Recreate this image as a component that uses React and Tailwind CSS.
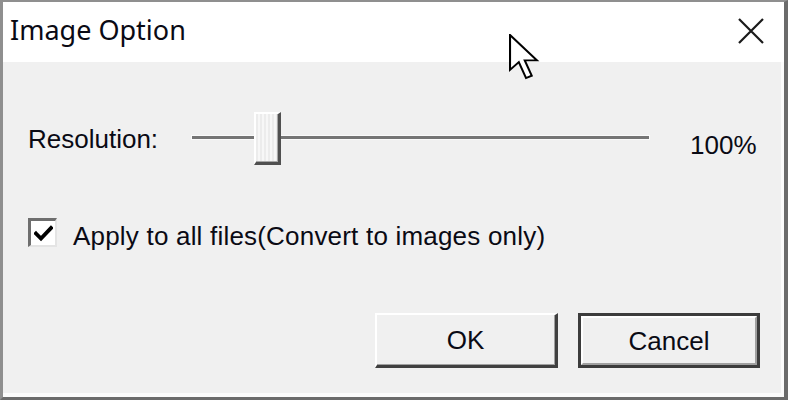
export default function App() {
  return (
    <div className="relative w-[788px] h-[400px] overflow-hidden bg-white">
      {/* window frame */}
      <div className="flex flex-col w-full h-full border-l-[3px] border-t-[2px] border-r-[4px] border-b-[3px] border-l-[#8f8f8f] border-t-[#8f8f8f] border-r-[#6b6b6b] border-b-[#6b6b6b]">
        {/* title bar */}
        <div className="flex items-start justify-between h-[60px] shrink-0 bg-white pl-[7px] pr-[19px]">
          <div className="mt-[10px] text-[27px] leading-[36px] text-[#0a0a14]" style={{ fontFamily: '"Noto Sans", sans-serif' }}>
            Image Option
          </div>
          <svg width="28" height="26" viewBox="0 0 28 26" className="mt-[16px]">
            <path d="M2 1 L26 25 M26 1 L2 25" stroke="#1a1a1a" strokeWidth="2.2" fill="none" />
          </svg>
        </div>

        {/* body */}
        <div
          className="flex-1 flex flex-col bg-[#f0f0f0] border-r-[3px] border-b-[4px] border-[#fbfbfb] pl-[25px] pr-[21px] pt-[50px] text-[26px] leading-[30px] text-[#0a0a14]"
          style={{ fontFamily: '"Liberation Sans", Arial, sans-serif' }}
        >
          {/* resolution row */}
          <div className="flex items-start h-[53px]">
            <div className="w-[162px] mt-[12px]">Resolution:</div>
            <div className="relative w-[462px] h-[53px]">
              <div className="absolute left-[2px] right-[3px] top-[24px] h-[3px] bg-[#757575] shadow-[0_0_0_1px_#fafafa]" />
              {/* thumb */}
              <div className="absolute left-[64px] top-0 w-[27px] h-[53px] flex border-l-2 border-t-2 border-white border-r-[3px] border-b-[3px] border-r-[#505050] border-b-[#505050] bg-[#ebebeb]">
                <div className="flex-1 border-r border-b border-[#a8a8a8] bg-[repeating-linear-gradient(90deg,#ececec_0px,#ececec_2px,#f7f7f7_2px,#f7f7f7_4px)]" />
              </div>
            </div>
            <div className="ml-[38px] mt-[18px]">100%</div>
          </div>

          {/* checkbox row */}
          <div className="flex items-start mt-[53px] h-[30px]">
            <div className="w-[29px] h-[29px] shrink-0 border-l-[3px] border-t-[3px] border-l-[#6e6e6e] border-t-[#6e6e6e] border-r-2 border-b-2 border-r-[#e4e4e4] border-b-[#e4e4e4] bg-white flex items-center justify-center">
              <svg width="19" height="17" viewBox="0 0 19 17">
                <path d="M2 8.5 L7 13.5 L17 3" stroke="#000" strokeWidth="3.8" fill="none" strokeLinecap="square" />
              </svg>
            </div>
            <div className="ml-[16px] mt-[3px] whitespace-nowrap tracking-[0.2px]">Apply to all files(Convert to images only)</div>
          </div>

          {/* buttons */}
          <div className="flex justify-end gap-[20px] mt-[65px]">
            <button className="w-[183px] h-[55px] flex items-center justify-center bg-[#f0f0f0] border-l-2 border-t-2 border-white border-r-[3px] border-b-[3px] border-r-[#404040] border-b-[#404040]">
              <span className="w-full h-full flex items-center justify-center border-r border-b border-[#a0a0a0]">OK</span>
            </button>
            <button className="w-[182px] h-[55px] flex bg-[#f0f0f0] border-[3px] border-[#3c3c3c]">
              <span className="w-full h-full flex items-center justify-center border-l-2 border-t-2 border-white border-r-2 border-b-2 border-r-[#a0a0a0] border-b-[#a0a0a0]">Cancel</span>
            </button>
          </div>
        </div>
      </div>

      {/* mouse cursor overlay */}
      <svg className="absolute left-[509px] top-[34px]" width="31" height="46" viewBox="0 0 12 19" preserveAspectRatio="none">
        <polygon points="0.4,0.4 0.4,14.8 3.8,11.6 6.6,18.2 8.8,17.2 6.1,10.9 10.8,10.9" fill="#fff" stroke="#000" strokeWidth="0.8" strokeLinejoin="miter" />
      </svg>
    </div>
  );
}
